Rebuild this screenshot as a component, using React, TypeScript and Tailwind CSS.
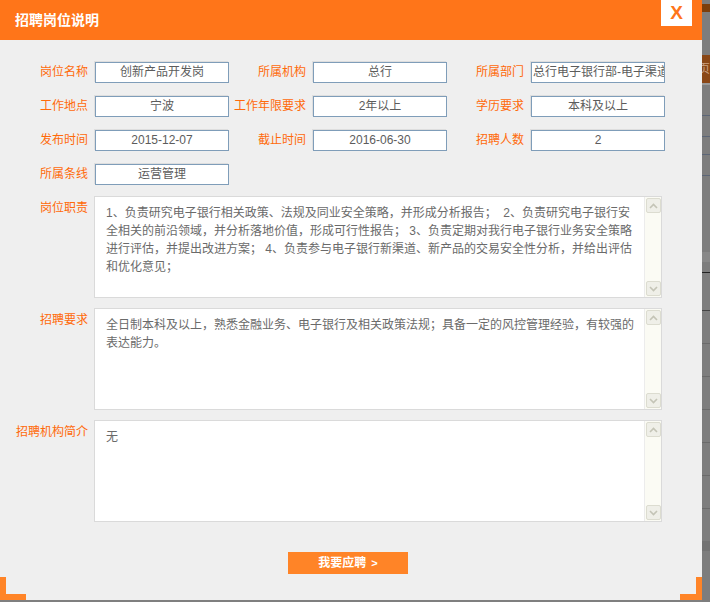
import React from "react";

const FONT = "font-['Liberation_Sans','Noto_Sans_CJK_SC',sans-serif]";

function Field({ label, value }: { label: string; value: string }) {
  return (
    <div className="flex items-center">
      <div className="w-[77px] text-right text-[12px] leading-[21px] text-[#ff6a0a]">{label}</div>
      <div className="ml-[7px] w-[134px] h-[21px] border border-[#7f9db9] bg-white shadow-[-1px_-1px_0_#dedede] text-center text-[12px] leading-[19px] text-[#5c5c5c] overflow-hidden whitespace-nowrap">
        {value}
      </div>
    </div>
  );
}

function Chevron({ up }: { up?: boolean }) {
  return (
    <svg width="9" height="6" viewBox="0 0 9 6">
      <path d={up ? "M1 5 L4.5 1.5 L8 5" : "M1 1 L4.5 4.5 L8 1"} fill="none" stroke="#c4c4b6" strokeWidth="1.6" />
    </svg>
  );
}

function ScrollBar() {
  return (
    <div className="w-[17px] h-full flex flex-col justify-between bg-[#fbfbf4] border-l border-[#ececec] py-[1px]">
      <div className="mx-auto w-[15px] h-[15px] flex items-center justify-center bg-[#efefe8] border border-[#dcdcd0] rounded-[2px]">
        <Chevron up />
      </div>
      <div className="mx-auto w-[15px] h-[15px] flex items-center justify-center bg-[#efefe8] border border-[#dcdcd0] rounded-[2px]">
        <Chevron />
      </div>
    </div>
  );
}

function AreaRow({ label, lines }: { label: string; lines: string[] }) {
  return (
    <div className="flex">
      <div className="w-[88px] text-right text-[12px] leading-[18px] pt-[3px] text-[#ff6a0a] whitespace-nowrap">{label}</div>
      <div className="ml-[6px] w-[568px] h-[102px] border border-[#dadada] bg-white flex">
        <div className="flex-1 pl-[11px] pt-[7px] text-[12px] leading-[18px] text-[#6a6a6a] whitespace-pre overflow-hidden">
          {lines.map((l, i) => (
            <div key={i}>{l}</div>
          ))}
        </div>
        <ScrollBar />
      </div>
    </div>
  );
}

export default function App() {
  return (
    <div className={`${FONT} w-[710px] h-[602px] bg-[#7f7f7f] flex items-start overflow-hidden`}>
      <div className="relative w-[702px] h-[600px] bg-[#efefef] flex flex-col">
        <div className="h-[40px] bg-[#ff7519] flex items-center pl-[15px]">
          <span className="text-white text-[14px] font-bold">招聘岗位说明</span>
        </div>
        <div className="absolute top-0 right-[10px] w-[31px] h-[26px] bg-white flex items-center justify-center">
          <span className="text-[#ff7519] text-[19px] font-bold leading-none font-['Liberation_Sans',sans-serif] -mt-[2px]">X</span>
        </div>

        <div className="pl-[11px] pt-[22px] grid grid-cols-[218px_218px_218px] gap-y-[13px]">
          <Field label="岗位名称" value="创新产品开发岗" />
          <Field label="所属机构" value="总行" />
          <div className="flex items-center">
            <div className="w-[77px] text-right text-[12px] leading-[21px] text-[#ff6a0a]">所属部门</div>
            <div className="ml-[7px] w-[134px] h-[21px] border border-[#7f9db9] bg-white shadow-[-1px_-1px_0_#dedede] pl-[1px] text-[12px] leading-[19px] text-[#5c5c5c] overflow-hidden whitespace-nowrap">
              总行电子银行部-电子渠道
            </div>
          </div>
          <Field label="工作地点" value="宁波" />
          <Field label="工作年限要求" value="2年以上" />
          <Field label="学历要求" value="本科及以上" />
          <Field label="发布时间" value="2015-12-07" />
          <Field label="截止时间" value="2016-06-30" />
          <Field label="招聘人数" value="2" />
          <Field label="所属条线" value="运营管理" />
        </div>

        <div className="mt-[11px] flex flex-col gap-[10px]">
          <AreaRow
            label="岗位职责"
            lines={[
              "1、负责研究电子银行相关政策、法规及同业安全策略，并形成分析报告；  2、负责研究电子银行安",
              "全相关的前沿领域，并分析落地价值，形成可行性报告； 3、负责定期对我行电子银行业务安全策略",
              "进行评估，并提出改进方案； 4、负责参与电子银行新渠道、新产品的交易安全性分析，并给出评估",
              "和优化意见；",
            ]}
          />
          <AreaRow
            label="招聘要求"
            lines={[
              "全日制本科及以上，熟悉金融业务、电子银行及相关政策法规；具备一定的风控管理经验，有较强的",
              "表达能力。",
            ]}
          />
          <AreaRow label="招聘机构简介" lines={["无"]} />
        </div>

        <div className="mt-[30px] ml-[288px] w-[120px] h-[22px] bg-[#ff8427] flex items-center justify-center text-white text-[12px] font-bold">
          我要应聘 <span className="ml-[5px] text-[11px]">&gt;</span>
        </div>

        <div className="absolute left-0 bottom-0 w-[6px] h-[23px] bg-[#ff8427]" />
        <div className="absolute left-0 bottom-0 w-[26px] h-[6px] bg-[#ff8427]" />
        <div className="absolute right-0 bottom-0 w-[6px] h-[23px] bg-[#ff8427]" />
        <div className="absolute right-0 bottom-0 w-[22px] h-[6px] bg-[#ff8427]" />
      </div>

      <div className="relative w-[8px] h-[602px] bg-[#7d7d7d] overflow-hidden">
        <div className="absolute left-0 top-[4px] w-full h-[8px] bg-[#7c3f0c]" />
        <div className="absolute left-0 top-[55px] w-full h-[28px] bg-[#8a4716] text-[#c9a080] text-[12px] leading-[28px] -indent-[4px]">页</div>
        <div className="absolute left-0 top-[83px] w-full h-[2px] bg-[#9a9a9a]" />
        <div className="absolute left-0 top-[115px] w-full h-[1px] bg-[#5c6677]" />
        <div className="absolute left-0 top-[136px] w-full h-[1px] bg-[#5c6677]" />
        <div className="absolute left-0 top-[154px] w-full h-[1px] bg-[#5c6677]" />
        <div className="absolute left-0 top-[175px] w-full h-[1px] bg-[#5c6677]" />
        <div className="absolute left-0 top-[252px] w-full h-[10px] bg-[#888888]" />
        <div className="absolute left-0 top-[272px] w-full h-[1px] bg-[#222]" />
        <div className="absolute left-0 top-[310px] w-full h-[1px] bg-[#444]" />
        <div className="absolute left-0 top-[343px] w-full h-[1px] bg-[#6a6a6a]" />
        <div className="absolute left-0 top-[376px] w-full h-[1px] bg-[#6a6a6a]" />
        <div className="absolute left-0 top-[409px] w-full h-[1px] bg-[#6a6a6a]" />
        <div className="absolute left-0 top-[442px] w-full h-[1px] bg-[#6a6a6a]" />
        <div className="absolute left-0 top-[475px] w-full h-[1px] bg-[#6a6a6a]" />
        <div className="absolute left-0 top-[508px] w-full h-[1px] bg-[#6a6a6a]" />
        <div className="absolute left-0 top-[541px] w-full h-[1px] bg-[#6a6a6a]" />
        <div className="absolute left-0 top-[541px] w-full h-[10px] bg-[#737373]" />
      </div>
    </div>
  );
}
